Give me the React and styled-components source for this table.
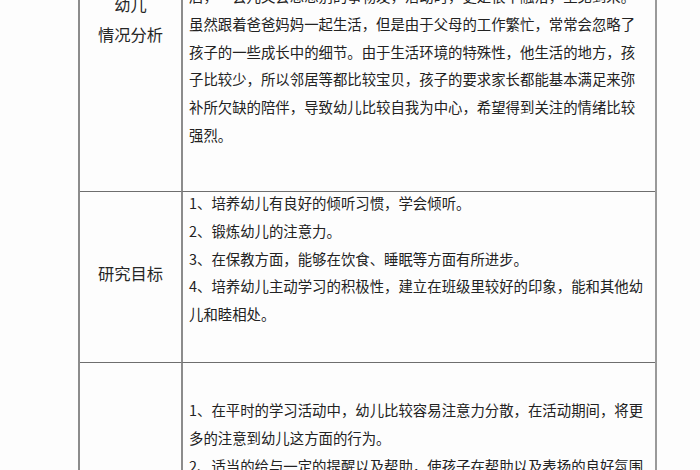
import React from "react";
import styled, { createGlobalStyle } from "styled-components";

const Global = createGlobalStyle`
  html, body { margin: 0; padding: 0; background: #fdfdfd; overflow: hidden; }
  body { font-family: "Noto Sans CJK SC", "Noto Sans", sans-serif; color: #222; }
`;

const Page = styled.div`
  width: 700px;
  height: 470px;
  overflow: hidden;
`;

const Table = styled.div`
  margin: -14px 0 0 78px;
  width: 575px;
  display: grid;
  grid-template-columns: 101px 1fr;
  border-left: 2px solid #8c8c8c;
  border-right: 2px solid #9a9a9a;
`;

const Label = styled.div`
  display: flex;
  flex-direction: column;
  align-items: center;
  justify-content: ${(p) => (p.$top ? "flex-start" : "center")};
  gap: 9px;
  padding: ${(p) => p.$pad || "0"};
  border-top: ${(p) => (p.$first ? "none" : "1.5px solid #6e6e6e")};
  font-size: 16.3px;
  line-height: 21px;
  color: #262626;
`;

const Content = styled.div`
  display: flex;
  flex-direction: column;
  gap: 7.8px;
  padding: ${(p) => p.$pad || "0"};
  padding-left: 6px;
  border-left: 2px solid #8c8c8c;
  border-top: ${(p) => (p.$first ? "none" : "1.5px solid #6e6e6e")};
`;

const Line = styled.div`
  font-size: 14.4px;
  line-height: 20px;
  white-space: nowrap;
  width: ${(p) => (p.$w ? `${p.$w}px` : "auto")};
  text-align: justify;
  text-align-last: ${(p) => (p.$w ? "justify" : "left")};
`;

const rows = [
  {
    label: ["幼儿", "情况分析"],
    labelTop: true,
    labelPad: "8px 0 0 0",
    pad: "0 0 46px 0",
    lines: [
      ["后，一会儿又会想想别的事物发，活动时，更是很不融洽，坐见到来。", 444],
      ["虽然跟着爸爸妈妈一起生活，但是由于父母的工作繁忙，常常会忽略了", 444],
      ["孩子的一些成长中的细节。由于生活环境的特殊性，他生活的地方，孩", 444],
      ["子比较少，所以邻居等都比较宝贝，孩子的要求家长都能基本满足来弥", 444],
      ["补所欠缺的陪伴，导致幼儿比较自我为中心，希望得到关注的情绪比较", 444],
      ["强烈。"],
    ],
  },
  {
    label: ["研究目标"],
    labelPad: "0 0 8px 0",
    pad: "1px 0 38px 0",
    lines: [
      ["1、培养幼儿有良好的倾听习惯，学会倾听。"],
      ["2、锻炼幼儿的注意力。"],
      ["3、在保教方面，能够在饮食、睡眠等方面有所进步。"],
      ["4、培养幼儿主动学习的积极性，建立在班级里较好的印象，能和其他幼", 454],
      ["儿和睦相处。"],
    ],
  },
  {
    label: [],
    pad: "37px 0 20px 0",
    lines: [
      ["1、在平时的学习活动中，幼儿比较容易注意力分散，在活动期间，将更", 451],
      ["多的注意到幼儿这方面的行为。"],
      ["2、适当的给与一定的提醒以及帮助，使孩子在帮助以及表扬的良好氛围", 451],
    ],
  },
];

export default function App() {
  return (
    <Page>
      <Global />
      <Table>
        {rows.map((r, i) => (
          <React.Fragment key={i}>
            <Label $first={i === 0} $top={r.labelTop} $pad={r.labelPad}>
              {r.label.map((t) => (
                <span key={t}>{t}</span>
              ))}
            </Label>
            <Content $first={i === 0} $pad={r.pad}>
              {r.lines.map(([t, w], j) => (
                <Line key={j} $w={w}>
                  {t}
                </Line>
              ))}
            </Content>
          </React.Fragment>
        ))}
      </Table>
    </Page>
  );
}
